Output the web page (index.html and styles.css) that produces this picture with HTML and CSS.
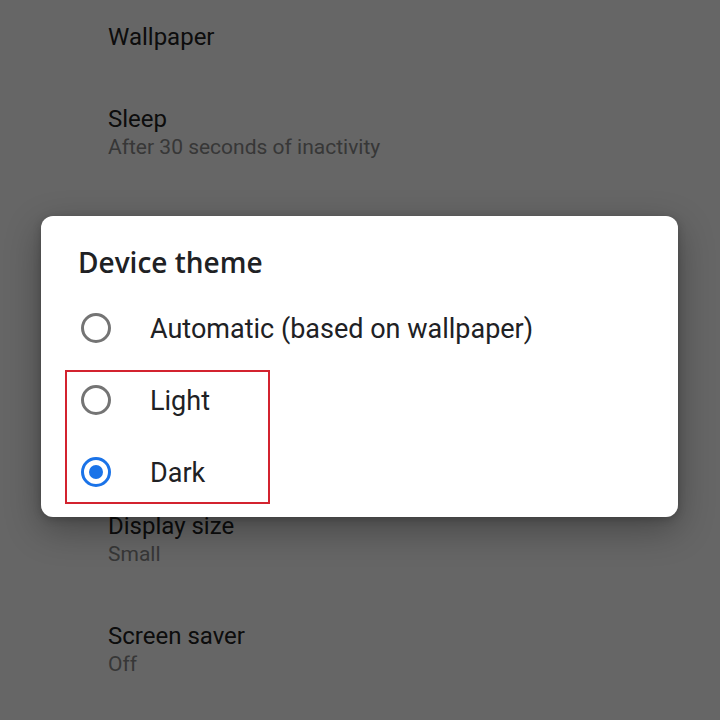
FILE: index.html
```html
<!DOCTYPE html>
<html>
  <head>
    <meta charset="UTF-8">
    <title>Display</title>
    <link rel="stylesheet" href="styles.css">
  </head>
  <body>
    <div class="settings">
      <div class="item">
        <div class="item-title">Wallpaper</div>
      </div>
      <div class="item">
        <div class="item-title">Sleep</div>
        <div class="item-sub">After 30 seconds of inactivity</div>
      </div>
      <!-- rows under the dialog -->
      <div class="covered"></div>
      <div class="item">
        <div class="item-title">Display size</div>
        <div class="item-sub">Small</div>
      </div>
      <div class="item">
        <div class="item-title">Screen saver</div>
        <div class="item-sub">Off</div>
      </div>
    </div>

    <div class="scrim"></div>

    <div class="dialog">
      <div class="dialog-title">Device theme</div>
      <div class="option">
        <span class="radio"></span>
        <span class="option-label">Automatic (based on wallpaper)</span>
      </div>
      <div class="highlight">
        <div class="option">
          <span class="radio"></span>
          <span class="option-label">Light</span>
        </div>
        <div class="option">
          <span class="radio checked"></span>
          <span class="option-label">Dark</span>
        </div>
      </div>
    </div>
  </body>
</html>
```

FILE: styles.css
```css
*, ::after, ::before {
  box-sizing: border-box;
}

html, body {
  margin: 0;
  width: 720px;
  height: 720px;
  overflow: hidden;
}

body {
  position: relative;
  background: #fff;
  font-family: Roboto, "Noto Sans", sans-serif;
}

/* settings list behind the dialog */
.settings {
  margin-top: -4px;
  padding-left: 108px;
}

.item {
  padding: 27px 0;
}

.covered {
  height: 297px;
}

.item-title {
  font-size: 24px;
  line-height: 28px;
  color: #222;
}

.item-sub {
  font-size: 21px;
  line-height: 28px;
  color: #8a8a8a;
}

.scrim {
  position: absolute;
  inset: 0;
  background: rgba(0, 0, 0, .6);
}

/* theme picker */
.dialog {
  position: absolute;
  left: 41px;
  top: 216px;
  width: 637px;
  height: 301px;
  padding: 28px 37px 8px;
  background: #fff;
  border-radius: 12px;
  box-shadow: 0 12px 36px rgba(0, 0, 0, .32), 0 2px 8px rgba(0, 0, 0, .2);
}

.dialog-title {
  font-family: "Open Sans", Roboto, sans-serif;
  font-size: 28px;
  line-height: 36px;
  font-weight: 600;
  color: #202124;
  margin-bottom: 12px;
}

.option {
  display: grid;
  grid-template-columns: 72px 1fr;
  align-items: center;
  height: 72px;
}

.option-label {
  font-size: 27px;
  line-height: 30px;
  color: #202124;
  padding-top: 1px;
}

.radio {
  position: relative;
  width: 30px;
  height: 30px;
  margin-left: 3px;
  border: 3px solid #747474;
  border-radius: 50%;
}

.radio.checked {
  border-color: #1a73e8;
}

.radio.checked::after {
  content: "";
  position: absolute;
  left: 5px;
  top: 5px;
  width: 14px;
  height: 14px;
  border-radius: 50%;
  background: #1a73e8;
}

.highlight {
  position: relative;
}

.highlight::after {
  content: "";
  position: absolute;
  left: -13px;
  top: 6px;
  width: 205px;
  bottom: 4px;
  border: 2px solid #d3232f;
}
```
